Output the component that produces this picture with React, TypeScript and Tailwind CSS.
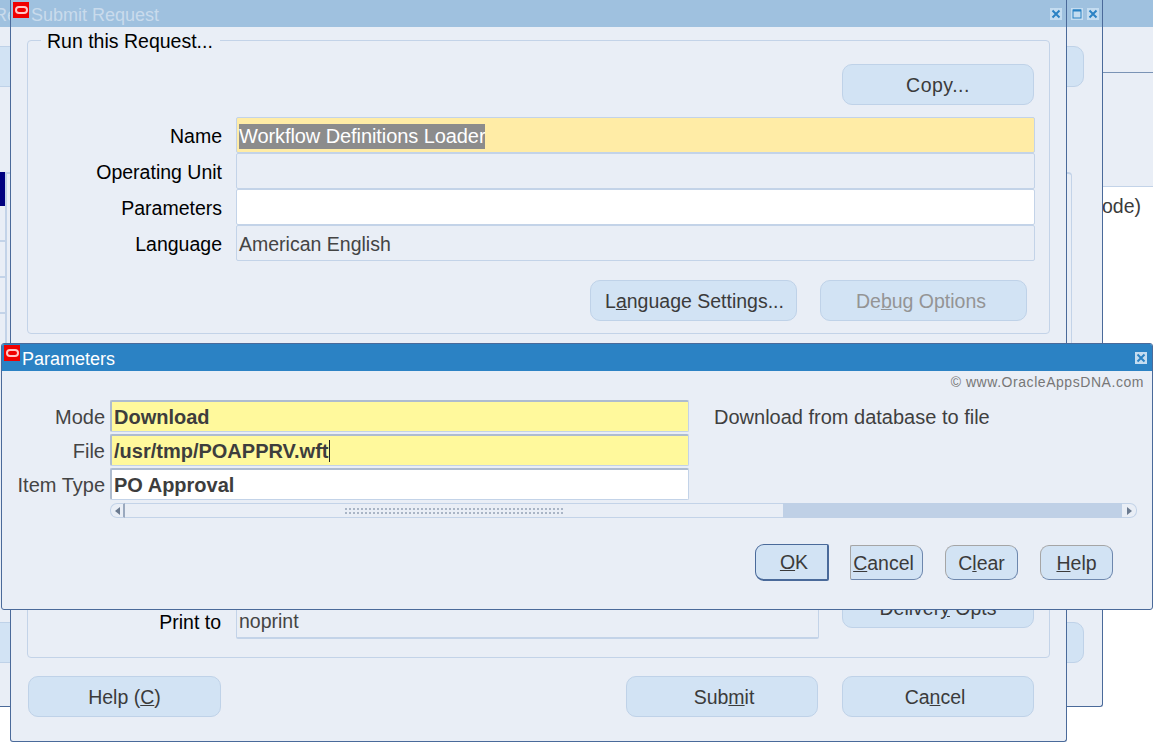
import type { ReactNode } from "react";

const FONT = "font-['Liberation_Sans',Arial,sans-serif]";

function OracleLogo() {
  return (
    <div className="w-4 h-4 shrink-0 bg-[#f00000] pt-[4px] pl-[2px]">
      <div className="w-[13px] h-[8px] rounded-[4px] border-2 border-[#ffc8c8]" />
    </div>
  );
}

function WinIcon({ kind }: { kind: "close" | "max" }) {
  return (
    <div className="w-3 h-3 bg-[#c4dcf0] flex items-center justify-center">
      {kind === "close" ? (
        <svg width="10" height="10" viewBox="0 0 10 10">
          <path d="M1.5 1.5 L8.5 8.5 M8.5 1.5 L1.5 8.5" stroke="#2b82c4" strokeWidth="2" />
        </svg>
      ) : (
        <svg width="10" height="10" viewBox="0 0 10 10">
          <rect x="1" y="1" width="8" height="8" fill="none" stroke="#2b82c4" strokeWidth="1" />
          <path d="M1 1.5 H9" stroke="#2b82c4" strokeWidth="2" />
        </svg>
      )}
    </div>
  );
}

function Btn({ className, children }: { className: string; children: ReactNode }) {
  return (
    <div
      className={`h-[41px] flex items-center justify-center pt-[3px] bg-[#d2e3f4] border border-[#bfd2e8] rounded-[10px] text-[#3b3b3b] ${className}`}
    >
      <span>{children}</span>
    </div>
  );
}

function DlgBtn({ className, children }: { className: string; children: ReactNode }) {
  return (
    <div
      className={`h-[35px] flex items-center justify-center pt-[2px] bg-[#d2e3f4] border border-t-[#a5a5a5] border-l-[#a5a5a5] border-r-[#6d87ad] border-b-[#6d87ad] text-[#3b3b3b] ${className}`}
    >
      <span>{children}</span>
    </div>
  );
}

function Label({ children }: { children: ReactNode }) {
  return <div className="w-[194px] text-right text-black pr-px pt-[3px]">{children}</div>;
}

function ParamRow({
  label,
  value,
  bg,
  caret,
  note,
}: {
  label: string;
  value: string;
  bg: string;
  caret?: boolean;
  note?: string;
}) {
  return (
    <div className="flex items-center h-8 text-[20px]">
      <div className="w-[103px] text-right text-[#444] pt-[2px]">{label}</div>
      <div
        className={`ml-[5px] w-[579px] h-8 flex items-center pl-[2px] border-2 border-r border-b border-t-[#aebccf] border-l-[#aebccf] border-r-[#c3d3e8] border-b-[#c3d3e8] rounded-[2px] font-bold text-[#3d3d3d] ${bg}`}
      >
        {value}
        {caret && <span className="w-px h-[22px] bg-[#222]" />}
      </div>
      {note && <div className="ml-[25px] text-[#3f3f3f] pt-[2px]">{note}</div>}
    </div>
  );
}

function ScrollBar() {
  return (
    <div className="ml-[108px] mt-[3px] w-[1027px] h-[15px] flex">
      <div className="w-[15px] h-full bg-[#e9eef6] border border-r-2 border-[#c3d3e8] border-r-[#9aa9bf] rounded-l-[7px] flex items-center justify-center">
        <div className="w-0 h-0 border-y-[4px] border-y-transparent border-r-[5px] border-r-[#6b7a90]" />
      </div>
      <div className="w-[658px] h-full bg-[#e9eef6] border-y border-[#c3d3e8] flex items-center justify-center">
        <div className="w-[220px] h-[7px] bg-[radial-gradient(#a9b5c6_1px,transparent_1px)] bg-[length:4px_4px]" />
      </div>
      <div className="flex-1 h-full bg-[#bfd0e6]" />
      <div className="w-[15px] h-full bg-[#e9eef6] border border-l-0 border-[#c3d3e8] rounded-r-[7px] flex items-center justify-center">
        <div className="w-0 h-0 border-y-[4px] border-y-transparent border-l-[5px] border-l-[#6b7a90]" />
      </div>
    </div>
  );
}

function ParametersDialog() {
  return (
    <div className="absolute left-[1px] top-[343px] w-[1152px] h-[267px] bg-[#e9eef6] border border-[#4a6a9a] rounded-[3px] overflow-hidden">
      <div className="h-[27px] bg-[#2b82c4] flex items-center text-white text-[18px] pl-[2px]">
        <div className="-mt-[9px]">
          <OracleLogo />
        </div>
        <span className="ml-[2px] pt-[3px]">Parameters</span>
        <div className="ml-auto mr-[5px]">
          <WinIcon kind="close" />
        </div>
      </div>
      <div className="h-[29px] flex items-center justify-end pr-[8px] pb-[7px] text-[14px] tracking-[0.55px] text-[#777]">
        © www.OracleAppsDNA.com
      </div>
      <div className="flex flex-col gap-[2px]">
        <ParamRow label="Mode" value="Download" bg="bg-[#fff99c]" note="Download from database to file" />
        <ParamRow label="File" value="/usr/tmp/POAPPRV.wft" bg="bg-[#fff99c]" caret />
        <ParamRow label="Item Type" value="PO Approval" bg="bg-white" />
      </div>
      <ScrollBar />
      <div className="flex mt-[26px] ml-[753px] items-center">
        <div className="w-[74px] h-[37px] flex items-center justify-center pt-[2px] pl-[5px] bg-[#d2e3f4] border border-r-2 border-b-2 border-[#4a6a9a] rounded-l-[9px] rounded-tr-[2px] rounded-br-[2px] text-[#3b3b3b]">
          <span>
            <u>O</u>K
          </span>
        </div>
        <DlgBtn className="ml-[21px] w-[73px] pr-[6px] rounded-r-[9px] rounded-l-[2px]">
          <u>C</u>ancel
        </DlgBtn>
        <DlgBtn className="ml-[22px] w-[73px] rounded-[9px]">
          C<u>l</u>ear
        </DlgBtn>
        <DlgBtn className="ml-[22px] w-[73px] rounded-[9px]">
          <u>H</u>elp
        </DlgBtn>
      </div>
    </div>
  );
}

function SubmitRequestWindow() {
  const fields = [
    { label: "Name", cls: "bg-[#ffeca6]" },
    { label: "Operating Unit", cls: "bg-[#e9eef6]" },
    { label: "Parameters", cls: "bg-white" },
    { label: "Language", cls: "bg-[#e9eef6]" },
  ];
  return (
    <div className="absolute left-[10px] top-0 w-[1057px] h-[742px] bg-[#e9eef6] border-x border-b border-[#4a6a9a] rounded-b-[3px]">
      <div className="h-[27px] bg-[#9fc1df] flex items-center text-[#c9dbec] text-[18px] pl-[2px]">
        <div className="-mt-[7px]">
          <OracleLogo />
        </div>
        <span className="ml-[2px] pt-[3px]">Submit Request</span>
        <div className="ml-auto mr-[4px]">
          <WinIcon kind="close" />
        </div>
      </div>

      <div className="relative ml-[16px] mt-[13px] w-[1023px] h-[294px] border border-[#c3d3e8] rounded-[4px] pt-[23px] pl-px">
        <div className="absolute left-[13px] -top-[13px] pl-[6px] pr-[7px] bg-[#e9eef6] text-black leading-[26px]">
          Run this Request...
        </div>
        <div className="flex justify-end pr-[15px]">
          <Btn className="w-[192px] tracking-[0.5px]">Copy...</Btn>
        </div>
        <div className="mt-[12px] flex flex-col">
          {fields.map((f) => (
            <div key={f.label} className="flex items-center h-9">
              <Label>{f.label}</Label>
              <div
                className={`ml-[13px] w-[799px] h-9 flex items-center pl-[2px] pt-[3px] border border-[#c3d3e8] rounded-[2px] text-[#444] ${f.cls}`}
              >
                {f.label === "Name" && (
                  <span className="bg-[#8c8c8c] text-white text-[20px] tracking-[-0.08px] leading-[25px]">
                    Workflow Definitions Loader
                  </span>
                )}
                {f.label === "Language" && "American English"}
              </div>
            </div>
          ))}
        </div>
        <div className="mt-[19px] flex pl-[561px]">
          <Btn className="w-[207px] pl-[2px]">
            L<u>a</u>nguage Settings...
          </Btn>
          <Btn className="ml-[23px] w-[207px] pr-[5px] text-[#949494]">
            De<u>b</u>ug Options
          </Btn>
        </div>
      </div>

      <div className="ml-[16px] mt-[11px] w-[1023px] h-[313px] border border-[#c3d3e8] rounded-[4px] flex flex-col justify-end pb-[18px]">
        <div className="flex items-center">
          <Label>Print to</Label>
          <div className="ml-[14px] w-[583px] h-9 flex items-center pl-[2px] pt-[3px] border border-[#c3d3e8] border-b-2 rounded-[2px] text-[#444]">
            noprint
          </div>
          <Btn className="ml-[23px] w-[192px] -mt-[27px]">
            Deliver<u>y</u> Opts
          </Btn>
        </div>
      </div>

      <div className="ml-[17px] mt-[18px] flex">
        <Btn className="w-[193px]">
          Help (<u>C</u>)
        </Btn>
        <Btn className="ml-[405px] w-[192px] pl-[4px]">
          Sub<u>m</u>it
        </Btn>
        <Btn className="ml-[24px] w-[192px] pr-[6px]">
          Ca<u>n</u>cel
        </Btn>
      </div>
    </div>
  );
}

function MiddleWindow() {
  return (
    <div className="absolute -left-[30px] top-0 w-[1133px] h-[707px] bg-[#e9eef6] border-r border-b border-[#4a6a9a] rounded-br-[3px]">
      <div className="h-[27px] bg-[#9fc1df] flex items-center text-[#c9dbec] text-[18px] pl-[24px]">
        <span className="pt-[3px]">Re</span>
        <div className="ml-auto flex gap-1 mr-[3px]">
          <WinIcon kind="max" />
          <WinIcon kind="close" />
        </div>
      </div>
      <div className="mt-[19px] w-[1114px] h-[41px] bg-[#d2e3f4] border border-[#bfd2e8] rounded-r-[10px]" />
      <div className="mt-[85px] h-[300px] flex">
        <div className="w-[35px] flex flex-col items-stretch">
          <div className="h-[34px] bg-[#000080]" />
          <div className="h-9 border-b-2 border-[#c3d3e8]" />
          <div className="h-9 border-b-2 border-[#c3d3e8]" />
          <div className="h-9 border-b-2 border-[#c3d3e8]" />
        </div>
        <div className="w-[1067px] border-2 border-r border-b-0 border-[#c3d3e8] rounded-tr-[4px]" />
      </div>
      <div className="mt-[150px] w-[1114px] h-[41px] bg-[#d2e3f4] border border-[#bfd2e8] rounded-r-[10px]" />
    </div>
  );
}

export default function App() {
  return (
    <div className={`relative w-[1153px] h-[742px] overflow-hidden bg-white text-[19.5px] ${FONT}`}>
      <div className="h-[27px] bg-[#9fc1df]" />
      <div className="h-[46px] bg-[#e9eef6] border-b border-[#7a93b5]" />
      <div className="h-[114px] bg-[#e9eef6] border-b border-[#c3d3e8]" />
      <div className="flex justify-end pr-[12px] pt-[5px] text-[#3b3b3b]">(Mode)</div>

      <MiddleWindow />
      <SubmitRequestWindow />
      <ParametersDialog />
    </div>
  );
}
